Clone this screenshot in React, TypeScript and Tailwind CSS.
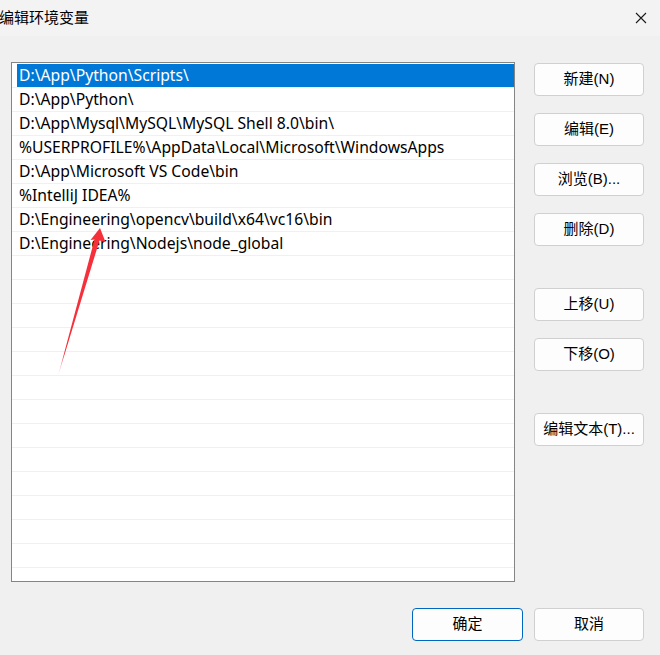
const paths = [
  "D:\\App\\Python\\Scripts\\",
  "D:\\App\\Python\\",
  "D:\\App\\Mysql\\MySQL\\MySQL Shell 8.0\\bin\\",
  "%USERPROFILE%\\AppData\\Local\\Microsoft\\WindowsApps",
  "D:\\App\\Microsoft VS Code\\bin",
  "%IntelliJ IDEA%",
  "D:\\Engineering\\opencv\\build\\x64\\vc16\\bin",
  "D:\\Engineering\\Nodejs\\node_global",
]

const rows = [...paths, ...Array(14).fill("")]

const font = { fontFamily: '"Liberation Sans", "Noto Sans CJK SC", sans-serif' }
const listFont = { fontFamily: '"Noto Sans", "Liberation Sans", sans-serif' }

function SideButton({ label, className = "" }: { label: string; className?: string }) {
  return (
    <button
      className={`h-[33px] w-[110px] rounded-[4px] border border-[#d0d0d0] bg-[#fdfdfd] text-[15px] text-black ${className}`}
    >
      {label}
    </button>
  )
}

export default function App() {
  return (
    <div className="relative h-[655px] w-[660px] overflow-hidden bg-[#f0f0f0]" style={font}>
      <div className="flex h-[36px] items-center justify-between bg-[#f3f3f3]">
        <span className="-ml-[1px] text-[15px] text-black">编辑环境变量</span>
        <svg width="12" height="12" viewBox="0 0 12 12" className="mr-[13px]">
          <path d="M1 1 L11 11 M11 1 L1 11" stroke="#1a1a1a" strokeWidth="1.1" />
        </svg>
      </div>

      <div className="flex pt-[26px] pl-[11px]">
        <div
          className="h-[520px] w-[504px] overflow-hidden border border-[#858585] bg-white pt-[1px]"
          style={listFont}
        >
          {rows.map((p, i) => (
            <div key={i} className="h-[24px] border-b border-[#f0f0f0]">
              <div
                className={`ml-[5px] flex h-[23px] items-center pl-[2px] pt-[1px] text-[15.7px] ${
                  i === 0 ? "bg-[#0078d7] text-white" : "text-black"
                }`}
              >
                {p}
              </div>
            </div>
          ))}
        </div>

        <div className="ml-[19px] flex flex-col pt-[1px]">
          <SideButton label="新建(N)" />
          <SideButton label="编辑(E)" className="mt-[17px]" />
          <SideButton label="浏览(B)..." className="mt-[17px]" />
          <SideButton label="删除(D)" className="mt-[17px]" />
          <SideButton label="上移(U)" className="mt-[42px]" />
          <SideButton label="下移(O)" className="mt-[17px]" />
          <SideButton label="编辑文本(T)..." className="mt-[42px]" />
        </div>
      </div>

      <div className="mt-[26px] flex justify-end gap-[11px] pr-[16px]">
        <button className="h-[33px] w-[111px] rounded-[4px] border border-[#0067c0] bg-[#fdfdfd] text-[15px] text-black">
          确定
        </button>
        <SideButton label="取消" />
      </div>

      <svg className="pointer-events-none absolute left-0 top-0" width="660" height="655">
        <defs>
          <linearGradient id="fade" x1="100" y1="228" x2="57" y2="376" gradientUnits="userSpaceOnUse">
            <stop offset="0" stopColor="#f5303a" />
            <stop offset="0.85" stopColor="#f5303a" />
            <stop offset="1" stopColor="#f5303a" stopOpacity="0.2" />
          </linearGradient>
        </defs>
        <polygon
          points="100,228 105.5,242 99.5,240.5 58,376 94.5,239.5 90.5,240"
          fill="url(#fade)"
        />
      </svg>
    </div>
  )
}
